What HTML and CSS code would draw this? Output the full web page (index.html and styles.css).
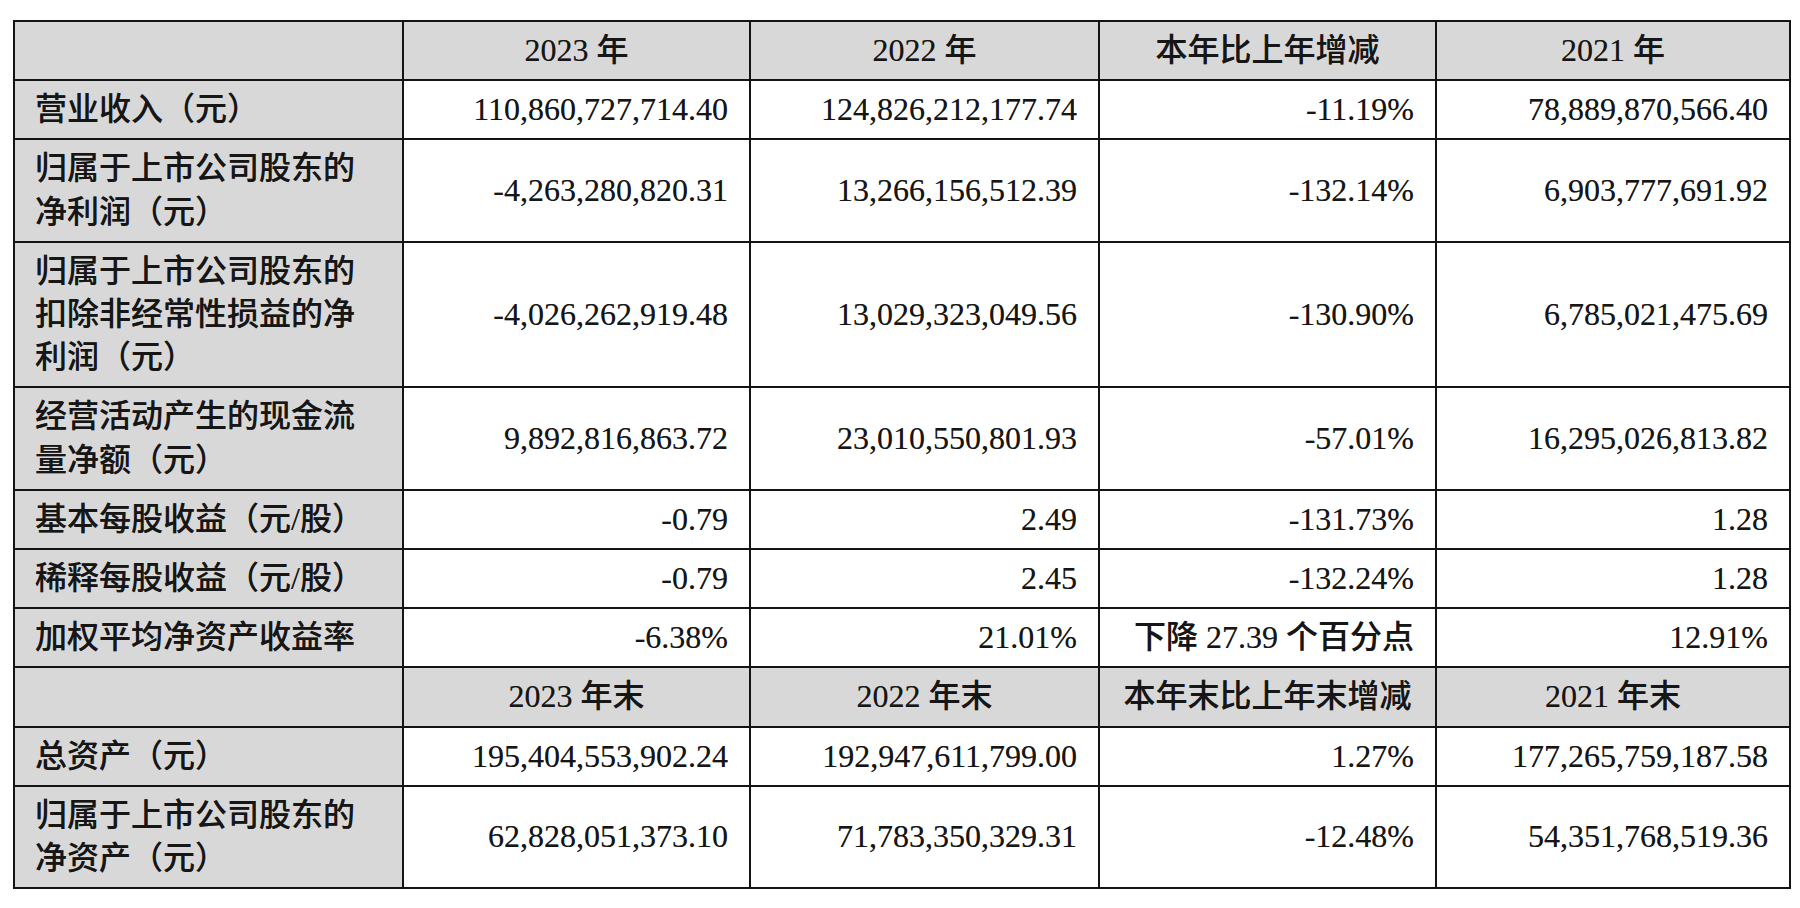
FILE: index.html
```html
<!DOCTYPE html>
<html lang="zh-CN">
<head>
<meta charset="utf-8">
<title>主要会计数据</title>
<link rel="stylesheet" href="styles.css">
</head>
<body>
<div class="page">
<table class="fin">
  <colgroup>
    <col class="c-label"><col class="c1"><col class="c2"><col class="c3"><col class="c4">
  </colgroup>
  <tr class="head">
    <th></th><th>2023 年</th><th>2022 年</th><th>本年比上年增减</th><th>2021 年</th>
  </tr>
  <tr>
    <th class="label">营业收入（元）</th><td>110,860,727,714.40</td><td>124,826,212,177.74</td><td>-11.19%</td><td>78,889,870,566.40</td>
  </tr>
  <tr>
    <th class="label">归属于上市公司股东的<br>净利润（元）</th><td>-4,263,280,820.31</td><td>13,266,156,512.39</td><td>-132.14%</td><td>6,903,777,691.92</td>
  </tr>
  <tr>
    <th class="label">归属于上市公司股东的<br>扣除非经常性损益的净<br>利润（元）</th><td>-4,026,262,919.48</td><td>13,029,323,049.56</td><td>-130.90%</td><td>6,785,021,475.69</td>
  </tr>
  <tr>
    <th class="label">经营活动产生的现金流<br>量净额（元）</th><td>9,892,816,863.72</td><td>23,010,550,801.93</td><td>-57.01%</td><td>16,295,026,813.82</td>
  </tr>
  <tr>
    <th class="label">基本每股收益（元/股）</th><td>-0.79</td><td>2.49</td><td>-131.73%</td><td>1.28</td>
  </tr>
  <tr>
    <th class="label">稀释每股收益（元/股）</th><td>-0.79</td><td>2.45</td><td>-132.24%</td><td>1.28</td>
  </tr>
  <tr>
    <th class="label">加权平均净资产收益率</th><td>-6.38%</td><td>21.01%</td><td>下降 27.39 个百分点</td><td>12.91%</td>
  </tr>
  <tr class="head">
    <th></th><th>2023 年末</th><th>2022 年末</th><th>本年末比上年末增减</th><th>2021 年末</th>
  </tr>
  <tr>
    <th class="label">总资产（元）</th><td>195,404,553,902.24</td><td>192,947,611,799.00</td><td>1.27%</td><td>177,265,759,187.58</td>
  </tr>
  <tr>
    <th class="label">归属于上市公司股东的<br>净资产（元）</th><td>62,828,051,373.10</td><td>71,783,350,329.31</td><td>-12.48%</td><td>54,351,768,519.36</td>
  </tr>
</table>
</div>
</body>
</html>
```

FILE: styles.css
```css
html, body {
  margin: 0;
  padding: 0;
  background: #ffffff;
}

.page {
  padding: 20px 0 0 13px;
}

.fin {
  border-collapse: collapse;
  width: 1776px;
  table-layout: fixed;
  font-family: "Liberation Serif", "Noto Sans CJK SC", serif;
  font-size: 32px;
  line-height: 43.2px;
  color: #161616;
  text-shadow: 0 0 0.6px rgba(0, 0, 0, 0.5);
}

.c-label { width: 389px; }
.c1 { width: 347px; }
.c2 { width: 349px; }
.c3 { width: 337px; }
.c4 { width: 354px; }

.fin th,
.fin td {
  border: 2px solid #141414;
  padding: 7px 21px 7px 20px;
  vertical-align: middle;
  white-space: nowrap;
  font-weight: 500;
}

.fin td {
  text-align: right;
  background: #ffffff;
}

.fin th {
  background: #d8d8d8;
}

.head th {
  text-align: center;
  padding-left: 8px;
  padding-right: 8px;
}

.fin th.label {
  text-align: left;
  padding-left: 20px;
}
```
